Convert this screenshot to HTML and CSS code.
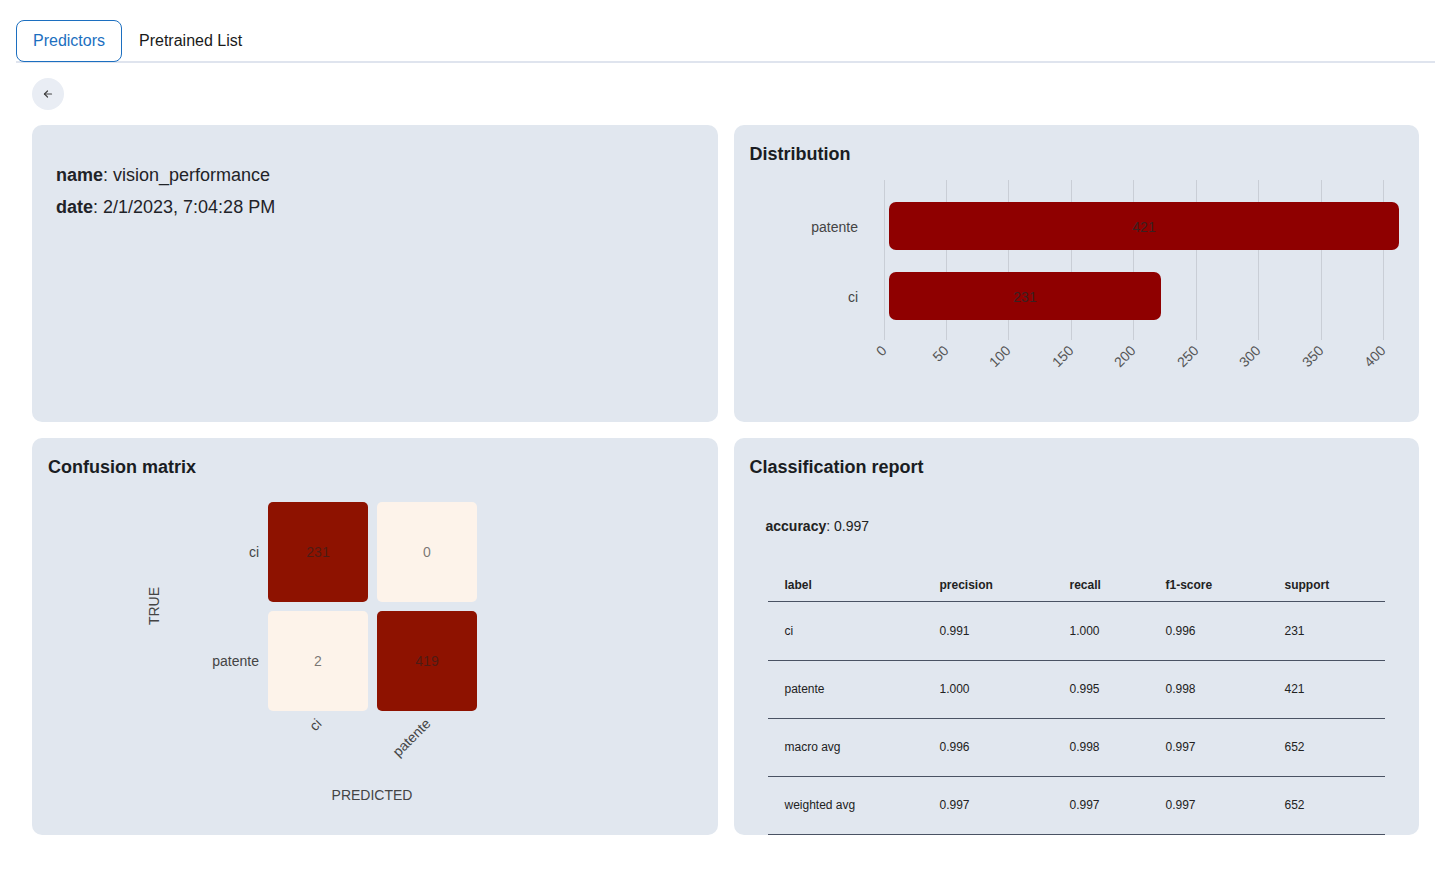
FILE: index.html
```html
<!DOCTYPE html>
<html>
<head>
<meta charset="utf-8">
<link rel="stylesheet" href="styles.css">
</head>
<body>
<div class="page">
  <div class="tabs">
    <button class="tab active">Predictors</button>
    <button class="tab">Pretrained List</button>
  </div>
  <div class="panel">
    <button class="back" aria-label="back">
      <svg width="12" height="12" viewBox="0 0 24 24" fill="none" stroke="#444" stroke-width="2.4" stroke-linecap="round" stroke-linejoin="round"><path d="M5 12h14"/><path d="M5 12l6 6"/><path d="M5 12l6-6"/></svg>
    </button>
    <div class="grid">
      <section class="card">
        <div class="info">
          <div class="info-line"><b>name</b>: vision_performance</div>
          <div class="info-line"><b>date</b>: 2/1/2023, 7:04:28 PM</div>
        </div>
      </section>
      <section class="card">
        <h2 class="card-title">Distribution</h2>
        <svg class="chart" width="653" height="240" viewBox="0 0 653 240">
          <g stroke="#c9ced6" stroke-width="1">
            <line x1="134.5" y1="15" x2="134.5" y2="175"/>
            <line x1="196.5" y1="15" x2="196.5" y2="175"/>
            <line x1="258.5" y1="15" x2="258.5" y2="175"/>
            <line x1="321.5" y1="15" x2="321.5" y2="175"/>
            <line x1="383.5" y1="15" x2="383.5" y2="175"/>
            <line x1="446.5" y1="15" x2="446.5" y2="175"/>
            <line x1="508.5" y1="15" x2="508.5" y2="175"/>
            <line x1="571.5" y1="15" x2="571.5" y2="175"/>
            <line x1="633.5" y1="15" x2="633.5" y2="175"/>
          </g>
          <rect x="139" y="37" width="510" height="48" rx="7" fill="#8f0000"/>
          <rect x="139" y="107" width="272" height="48" rx="7" fill="#8f0000"/>
          <g class="val" text-anchor="middle">
            <text x="394" y="62" dy="0.35em">421</text>
            <text x="275" y="132" dy="0.35em">231</text>
          </g>
          <g class="ylab" text-anchor="end">
            <text x="108" y="62" dy="0.35em">patente</text>
            <text x="108" y="132" dy="0.35em">ci</text>
          </g>
          <g class="xtick" text-anchor="end">
            <text transform="translate(134 183) rotate(-45)" dy="0.35em">0</text>
            <text transform="translate(196 183) rotate(-45)" dy="0.35em">50</text>
            <text transform="translate(258 183) rotate(-45)" dy="0.35em">100</text>
            <text transform="translate(321 183) rotate(-45)" dy="0.35em">150</text>
            <text transform="translate(383 183) rotate(-45)" dy="0.35em">200</text>
            <text transform="translate(446 183) rotate(-45)" dy="0.35em">250</text>
            <text transform="translate(508 183) rotate(-45)" dy="0.35em">300</text>
            <text transform="translate(571 183) rotate(-45)" dy="0.35em">350</text>
            <text transform="translate(633 183) rotate(-45)" dy="0.35em">400</text>
          </g>
        </svg>
      </section>
      <section class="card">
        <h2 class="card-title">Confusion matrix</h2>
        <svg class="matrix" width="654" height="340" viewBox="0 0 654 340">
          <rect x="220" y="24" width="100" height="100" rx="5" fill="#8e1200"/>
          <rect x="329" y="24" width="100" height="100" rx="5" fill="#fdf3ea"/>
          <rect x="220" y="133" width="100" height="100" rx="5" fill="#fdf3ea"/>
          <rect x="329" y="133" width="100" height="100" rx="5" fill="#8e1200"/>
          <g class="cell" text-anchor="middle">
            <text x="270" y="74" dy="0.35em">231</text>
            <text x="379" y="74" dy="0.35em">0</text>
            <text x="270" y="183" dy="0.35em">2</text>
            <text x="379" y="183" dy="0.35em">419</text>
          </g>
          <g class="mlab" text-anchor="end">
            <text x="211" y="74" dy="0.35em">ci</text>
            <text x="211" y="183" dy="0.35em">patente</text>
          </g>
          <text class="mlab" text-anchor="middle" transform="translate(106 128) rotate(-90)" dy="0.35em">TRUE</text>
          <g class="mlab" text-anchor="end">
            <text transform="translate(271 243) rotate(-45)" dy="0.35em">ci</text>
            <text transform="translate(380 243) rotate(-45)" dy="0.35em">patente</text>
          </g>
          <text class="mlab" text-anchor="middle" x="324" y="317" dy="0.35em">PREDICTED</text>
        </svg>
      </section>
      <section class="card">
        <h2 class="card-title">Classification report</h2>
        <div class="accuracy"><b>accuracy</b>: 0.997</div>
        <table class="report">
          <thead>
            <tr><th class="c1">label</th><th class="c2">precision</th><th class="c3">recall</th><th class="c4">f1-score</th><th class="c5">support</th></tr>
          </thead>
          <tbody>
            <tr class="first"><td>ci</td><td>0.991</td><td>1.000</td><td>0.996</td><td>231</td></tr>
            <tr><td>patente</td><td>1.000</td><td>0.995</td><td>0.998</td><td>421</td></tr>
            <tr><td>macro avg</td><td>0.996</td><td>0.998</td><td>0.997</td><td>652</td></tr>
            <tr><td>weighted avg</td><td>0.997</td><td>0.997</td><td>0.997</td><td>652</td></tr>
          </tbody>
        </table>
      </section>
    </div>
  </div>
</div>
</body>
</html>
```
FILE: styles.css
```css
* { box-sizing: border-box; }
html, body { margin: 0; padding: 0; background: #fff; }
body {
  font-family: "Liberation Sans", Arial, sans-serif;
  color: #1f2328;
}
.page {
  padding: 20px 7px 0 16px;
}
.tabs {
  display: flex;
  border-bottom: 2px solid #dfe4ee;
}
.tab {
  font-family: inherit;
  font-size: 16px;
  color: #1a1a1a;
  background: transparent;
  border: 1px solid transparent;
  border-radius: 8px 8px 0 0;
  height: 42px;
  padding: 0 16px;
  margin-bottom: -1px;
  cursor: pointer;
}
.tab.active {
  color: #1c6fc0;
  border-color: #1c6fc0;
  border-radius: 8px;
  width: 106px;
  padding: 0;
}
.panel {
  padding: 15px 16px 16px 16px;
}
.back {
  width: 32px;
  height: 32px;
  border-radius: 50%;
  border: none;
  background: #e9edf4;
  display: flex;
  align-items: center;
  justify-content: center;
  padding: 0;
  margin-bottom: 15px;
}
.grid {
  display: grid;
  grid-template-columns: 1fr 1fr;
  grid-template-rows: 297px 397px;
  gap: 16px 16px;
}
.card {
  background: #e1e7ef;
  border-radius: 10px;
  padding: 17px 16px 16px 16px;
  overflow: hidden;
}
.card-title {
  margin: 0;
  font-size: 18px;
  line-height: 24px;
  font-weight: 700;
  color: #1a1d23;
}
.info {
  padding: 17px 8px;
}
.info-line {
  font-size: 18px;
  line-height: 32px;
  color: #1f2328;
}
.chart, .matrix { display: block; margin-top: -1px; }
.chart text, .matrix text { font-family: "Liberation Sans", Arial, sans-serif; }
.val { font-size: 14px; fill: #3a2020; }
.ylab { font-size: 14px; fill: #444; }
.xtick { font-size: 14px; fill: #555; }
.cell { font-size: 14px; fill: #222; fill-opacity: 0.6; }
.mlab { font-size: 14px; fill: #444; }
.accuracy {
  font-size: 14px;
  line-height: 20px;
  margin: 37px 0 0 16px;
  color: #222;
}
.report {
  border-collapse: collapse;
  margin: 33px 18px 0 18px;
  width: 617px;
  font-size: 12px;
  color: #222;
}
.report th {
  text-align: left;
  font-weight: 700;
  height: 32px;
  padding: 0 16px 0 17px;
  vertical-align: middle;
  border-bottom: 1px solid #4a5263;
}
.report td {
  height: 58px;
  padding: 0 16px 0 17px;
  border-bottom: 1px solid #4a5263;
}
.report tr.first td { height: 59px; }
.report .c1 { width: 155px; }
.report .c2 { width: 130px; }
.report .c3 { width: 96px; }
.report .c4 { width: 119px; }
.report .c5 { width: 117px; }
```
